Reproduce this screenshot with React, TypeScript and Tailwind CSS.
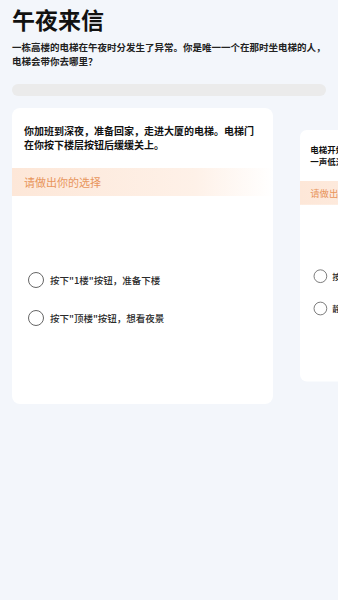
import React from "react";

const font = { fontFamily: '"Noto Sans CJK SC", "Noto Sans", sans-serif' };

function Card({ text, options, className = "" }: { text: string; options: string[]; className?: string }) {
  return (
    <div className={"shrink-0 w-[261px] h-[296px] bg-white rounded-[8px] overflow-hidden " + className}>
      <p className="px-3 pt-4 text-[10px] leading-[14px] font-bold text-[#111]">{text}</p>
      <div className="mt-4 h-[28px] flex items-center px-3 bg-linear-to-r from-[#fde7d8] via-[#fef1e8] via-70% to-white text-[11px] text-[#e8955c]">
        请做出你的选择
      </div>
      <div className="mt-[72px] flex flex-col gap-[14px] pl-4">
        {options.map((o) => (
          <div key={o} className="h-[24px] flex items-center gap-[6px]">
            <span className="w-4 h-4 rounded-full border-[1.5px] border-[#666] shrink-0" />
            <span className="text-[9.5px] font-medium text-[#2a2a2a] whitespace-nowrap">{o}</span>
          </div>
        ))}
      </div>
    </div>
  );
}

export default function App() {
  return (
    <div style={font} className="w-[338px] min-h-screen bg-[#f3f6fb] overflow-hidden">
      <div className="px-3">
        <h1 className="pt-[3px] text-[23px] leading-[32px] font-bold text-[#111]">午夜来信</h1>
        <p className="mt-[5px] text-[9.5px] leading-[14px] font-bold text-[#222]">
          一栋高楼的电梯在午夜时分发生了异常。你是唯一一个在那时坐电梯的人，电梯会带你去哪里？
        </p>
        <div className="mt-[16px] h-[12px] rounded-full bg-[#ebebeb]" />
      </div>
      <div className="mt-3 pl-3 flex items-start">
        <Card
          text="你加班到深夜，准备回家，走进大厦的电梯。电梯门在你按下楼层按钮后缓缓关上。"
          options={['按下"1楼"按钮，准备下楼', '按下"顶楼"按钮，想看夜景']}
        />
        <Card
          className="ml-[27px] mt-[22px] origin-top-left scale-[0.85]"
          text="电梯开始缓缓上升，却在中途突然停下，随后传来了一声低沉的叹息。"
          options={["按下紧急呼叫按钮", "静静等待电梯停下"]}
        />
      </div>
    </div>
  );
}
